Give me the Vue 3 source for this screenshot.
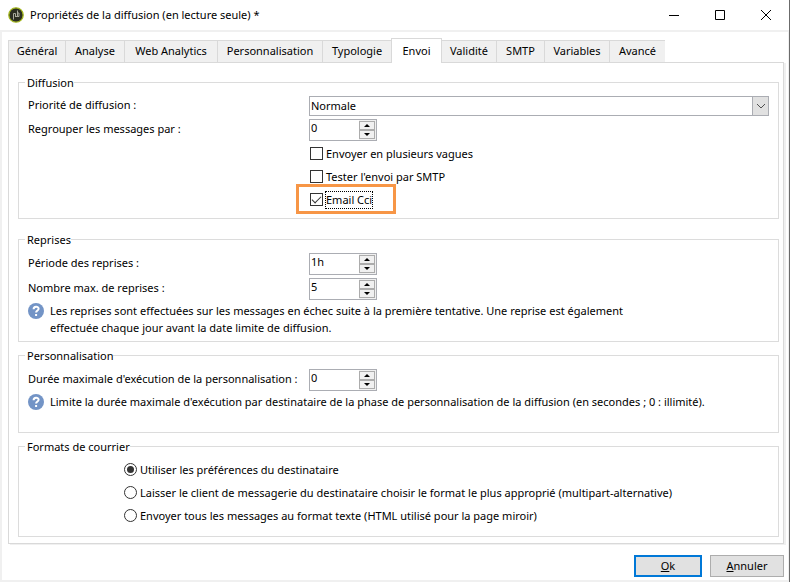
<script setup>
import { ref } from 'vue'

const tabs = ref([
  { label: 'Général', width: 57 },
  { label: 'Analyse', width: 59 },
  { label: 'Web Analytics', width: 93 },
  { label: 'Personnalisation', width: 105 },
  { label: 'Typologie', width: 69 },
  { label: 'Envoi', width: 51 },
  { label: 'Validité', width: 54 },
  { label: 'SMTP', width: 48 },
  { label: 'Variables', width: 65 },
  { label: 'Avancé', width: 56 }
])
const activeTab = ref('Envoi')

const priority = ref('Normale')
const grouping = ref('0')
const period = ref('1h')
const maxRetries = ref('5')
const maxDuration = ref('0')
const waves = ref(false)
const smtpTest = ref(false)
const emailBcc = ref(true)
const mailFormat = ref('prefs')

const formats = [
  { value: 'prefs', label: 'Utiliser les préférences du destinataire' },
  { value: 'multi', label: 'Laisser le client de messagerie du destinataire choisir le format le plus approprié (multipart-alternative)' },
  { value: 'text', label: 'Envoyer tous les messages au format texte (HTML utilisé pour la page miroir)' }
]

function step(model, delta) {
  const n = parseInt(model, 10) || 0
  return String(Math.max(0, n + delta)) + (model.endsWith('h') ? 'h' : '')
}
</script>

<template>
  <div class="window">
    <header class="titlebar">
      <svg class="logo" viewBox="0 0 16 16" aria-hidden="true">
        <circle cx="8" cy="8" r="7.2" fill="#2b2e22" stroke="#a3b61e" stroke-width="1.3" />
        <path d="M5.500 12.500V6.500h2v3.500M9.500 3.500v6.500M9.500 6h1.500v3.500h-3" fill="none" stroke="#a9aa9c" stroke-width="1" />
      </svg>
      <h1>Propriétés de la diffusion (en lecture seule) *</h1>
      <div class="captions">
        <button type="button" aria-label="Réduire">
          <svg viewBox="0 0 12 12"><path d="M1 6.500h10" /></svg>
        </button>
        <button type="button" aria-label="Agrandir">
          <svg viewBox="0 0 12 12"><path d="M1.500 1.500h9v9h-9z" /></svg>
        </button>
        <button type="button" aria-label="Fermer">
          <svg viewBox="0 0 12 12"><path d="M1 1l10 10M11 1L1 11" /></svg>
        </button>
      </div>
    </header>

    <main class="body">
      <div class="tabs" role="tablist">
        <button
          v-for="tab in tabs"
          :key="tab.label"
          type="button"
          role="tab"
          class="tab"
          :class="{ active: tab.label === activeTab }"
          :aria-selected="tab.label === activeTab"
          :style="{ width: tab.width + 'px' }"
          @click="activeTab = tab.label"
        >{{ tab.label }}</button>
      </div>

      <div class="panel">
        <fieldset class="group delivery">
          <legend>Diffusion</legend>
          <div class="row">
            <label for="priority">Priorité de diffusion :</label>
            <div class="combo">
              <select id="priority" v-model="priority">
                <option>Normale</option>
                <option>Haute</option>
                <option>Basse</option>
              </select>
              <span class="arrow"><svg viewBox="0 0 10 6"><path d="M1 1l4 4l4 -4" /></svg></span>
            </div>
          </div>
          <div class="row number">
            <label for="grouping">Regrouper les messages par :</label>
            <div class="spin">
              <input id="grouping" v-model="grouping" type="text" />
              <span class="steps">
                <button type="button" aria-label="Augmenter" @click="grouping = step(grouping, 1)"><i class="up"></i></button>
                <button type="button" aria-label="Diminuer" @click="grouping = step(grouping, -1)"><i class="down"></i></button>
              </span>
            </div>
          </div>
          <div class="checks">
            <label class="option"><input v-model="waves" type="checkbox" /><span>Envoyer en plusieurs vagues</span></label>
            <label class="option"><input v-model="smtpTest" type="checkbox" /><span>Tester l'envoi par SMTP</span></label>
            <label class="option marked"><input v-model="emailBcc" type="checkbox" /><span class="focus">Email Cci</span></label>
          </div>
        </fieldset>

        <fieldset class="group retries">
          <legend>Reprises</legend>
          <div class="row number">
            <label for="period">Période des reprises :</label>
            <div class="spin">
              <input id="period" v-model="period" type="text" />
              <span class="steps">
                <button type="button" aria-label="Augmenter" @click="period = step(period, 1)"><i class="up"></i></button>
                <button type="button" aria-label="Diminuer" @click="period = step(period, -1)"><i class="down"></i></button>
              </span>
            </div>
          </div>
          <div class="row number">
            <label for="retries">Nombre max. de reprises :</label>
            <div class="spin">
              <input id="retries" v-model="maxRetries" type="text" />
              <span class="steps">
                <button type="button" aria-label="Augmenter" @click="maxRetries = step(maxRetries, 1)"><i class="up"></i></button>
                <button type="button" aria-label="Diminuer" @click="maxRetries = step(maxRetries, -1)"><i class="down"></i></button>
              </span>
            </div>
          </div>
          <div class="hint">
            <svg viewBox="0 0 16 16" aria-hidden="true">
              <circle cx="8" cy="8" r="8" fill="#7394c6" />
              <path d="M5.600 6.200c0 -3.200 5 -3.200 5 -0.400c0 1.700 -2.500 1.700 -2.500 3.700M8.100 11v2" fill="none" stroke="#fff" stroke-width="2" />
            </svg>
            <p>Les reprises sont effectuées sur les messages en échec suite à la première tentative. Une reprise est également<br />effectuée chaque jour avant la date limite de diffusion.</p>
          </div>
        </fieldset>

        <fieldset class="group perso">
          <legend>Personnalisation</legend>
          <div class="row number">
            <label for="duration">Durée maximale d'exécution de la personnalisation :</label>
            <div class="spin">
              <input id="duration" v-model="maxDuration" type="text" />
              <span class="steps">
                <button type="button" aria-label="Augmenter" @click="maxDuration = step(maxDuration, 1)"><i class="up"></i></button>
                <button type="button" aria-label="Diminuer" @click="maxDuration = step(maxDuration, -1)"><i class="down"></i></button>
              </span>
            </div>
          </div>
          <div class="hint">
            <svg viewBox="0 0 16 16" aria-hidden="true">
              <circle cx="8" cy="8" r="8" fill="#7394c6" />
              <path d="M5.600 6.200c0 -3.200 5 -3.200 5 -0.400c0 1.700 -2.500 1.700 -2.500 3.700M8.100 11v2" fill="none" stroke="#fff" stroke-width="2" />
            </svg>
            <p>Limite la durée maximale d'exécution par destinataire de la phase de personnalisation de la diffusion (en secondes ; 0 : illimité).</p>
          </div>
        </fieldset>

        <fieldset class="group formats">
          <legend>Formats de courrier</legend>
          <div class="radios">
            <label v-for="f in formats" :key="f.value" class="option">
              <input v-model="mailFormat" type="radio" name="format" :value="f.value" /><span>{{ f.label }}</span>
            </label>
          </div>
        </fieldset>
      </div>

      <footer class="actions">
        <button type="button" class="ok"><span><u>O</u>k</span></button>
        <button type="button" class="cancel"><span><u>A</u>nnuler</span></button>
      </footer>
    </main>
  </div>
</template>

<style>
body {
  background: #fff;
}
</style>

<style scoped>
*,
*::before,
*::after {
  box-sizing: border-box;
}
.window {
  min-height: 100vh;
  display: flex;
  flex-direction: column;
  font: 11px/16px "Noto Sans", "Open Sans", sans-serif;
  color: #000;
  border-right: 1px solid #6b6b6b;
}
button,
input,
select {
  font: inherit;
  color: inherit;
  margin: 0;
  padding: 0;
  border-radius: 0;
}
.titlebar {
  display: flex;
  align-items: center;
  height: 30px;
  padding-left: 8px;
}
.logo {
  width: 16px;
  height: 16px;
}
h1 {
  flex: 1;
  margin: 0 0 0 6px;
  font-size: 11px;
  font-weight: 400;
}
.captions {
  display: flex;
}
.captions button {
  width: 46px;
  height: 30px;
  display: flex;
  align-items: center;
  justify-content: center;
  border: 0;
  background: none;
}
.captions svg {
  width: 12px;
  height: 12px;
  fill: none;
  stroke: #000;
}
.body {
  flex: 1;
  display: flex;
  flex-direction: column;
  border: 2px solid #f0f0f0;
  border-right-width: 1px;
  padding: 6px 4px 3px 6px;
}
.tabs {
  display: flex;
  align-items: flex-end;
  margin-bottom: -1px;
}
.tab {
  height: 23px;
  padding-bottom: 2px;
  border: 1px solid #d9d9d9;
  border-right: 0;
  background: #f0f0f0;
  white-space: nowrap;
}
.tab.active {
  height: 25px;
  padding-bottom: 1px;
  border-bottom: 0;
  border-right: 1px solid #d9d9d9;
  background: #fff;
  position: relative;
}
.tab.active + .tab {
  border-left: 0;
}
.panel {
  border: 1px solid #d9d9d9;
  box-shadow: 2px 1px 0 #f0f0f0;
  padding: 12px 4px 6px 9px;
}
.group {
  min-width: 0;
  margin: 0;
  padding: 0 9px;
  border: 1px solid #dcdcdc;
}
legend {
  margin-left: -3px;
  padding: 0 0 0 2px;
  height: 14px;
}
.delivery {
  height: 144px;
  padding-top: 7px;
}
.row {
  display: flex;
  align-items: flex-start;
}
.row > label {
  width: 281px;
  padding-top: 1px;
  white-space: nowrap;
}
.number > label {
  padding-top: 2px;
}
.combo {
  flex: 1;
  display: grid;
  height: 20px;
  margin-bottom: 3px;
}
.combo select,
.arrow {
  grid-area: 1 / 1;
}
.combo select {
  appearance: none;
  border: 1px solid #abadb3;
  background: #fff;
  padding: 0 0 1px 1px;
}
.arrow {
  justify-self: end;
  width: 17px;
  display: flex;
  align-items: center;
  justify-content: center;
  border: 1px solid #abadb3;
  background: #e1e1e1;
  pointer-events: none;
}
.arrow svg {
  width: 10px;
  height: 6px;
  fill: none;
  stroke: #505050;
}
.spin {
  display: flex;
  width: 68px;
  height: 22px;
  border: 1px solid #abadb3;
  background: #fff;
}
.spin input {
  flex: 1;
  min-width: 0;
  height: 16px;
  border: 0;
  padding-left: 1px;
  background: none;
  outline: none;
}
.steps {
  width: 17px;
  padding: 1px 1px 1px 0;
  display: flex;
  flex-direction: column;
  background: #f0f0f0;
}
.steps button {
  flex: 1;
  display: flex;
  align-items: center;
  justify-content: center;
  border: 1px solid #acacac;
  background: #f0f0f0;
}
.up,
.down {
  border: 3px solid transparent;
}
.up {
  border-top: 0;
  border-bottom-color: #000;
}
.down {
  border-bottom: 0;
  border-top-color: #000;
}
.option {
  display: flex;
  align-items: center;
  height: 23px;
}
.option input {
  appearance: none;
  flex: none;
  width: 13px;
  height: 13px;
  margin-right: 3px;
  border: 1px solid #333;
  background: #fff;
  display: grid;
  place-items: center;
}
.option input[type="radio"] {
  border-radius: 50%;
}
.option input[type="radio"]:checked::before {
  content: "";
  width: 7px;
  height: 7px;
  border-radius: 50%;
  background: #333;
}
.option input[type="checkbox"]:checked::before {
  content: "";
  width: 9px;
  height: 5px;
  border: solid #333;
  border-width: 0 0 1px 1px;
  transform: translateY(-1px) rotate(-45deg);
}
.checks {
  padding: 1px 0 0 282px;
}
.marked {
  position: relative;
}
.marked::after {
  content: "";
  position: absolute;
  left: -14px;
  top: -4px;
  width: 100px;
  height: 30px;
  border: 3px solid #f79646;
}
.focus {
  outline: 1px dotted #000;
}
.retries {
  margin-top: 13px;
  height: 110px;
  padding-top: 7px;
}
.retries .row,
.perso .row {
  margin-bottom: 3px;
}
.hint {
  display: flex;
  align-items: flex-start;
  gap: 6px;
}
.hint svg {
  flex: none;
  width: 16px;
  height: 16px;
}
.hint p {
  margin: -1px 0 0;
  line-height: 17px;
}
.perso {
  margin-top: 6px;
  height: 85px;
  padding-top: 7px;
}
.formats {
  margin-top: 6px;
  height: 98px;
}
.radios {
  padding: 5px 0 0 96px;
}
.actions {
  display: flex;
  justify-content: flex-end;
  gap: 8px;
  margin-top: auto;
}
.actions button {
  height: 22px;
  border: 1px solid #adadad;
  background: #e1e1e1;
}
.actions .ok {
  width: 68px;
  border: 2px solid #0078d7;
}
.actions .cancel {
  width: 74px;
}
</style>
